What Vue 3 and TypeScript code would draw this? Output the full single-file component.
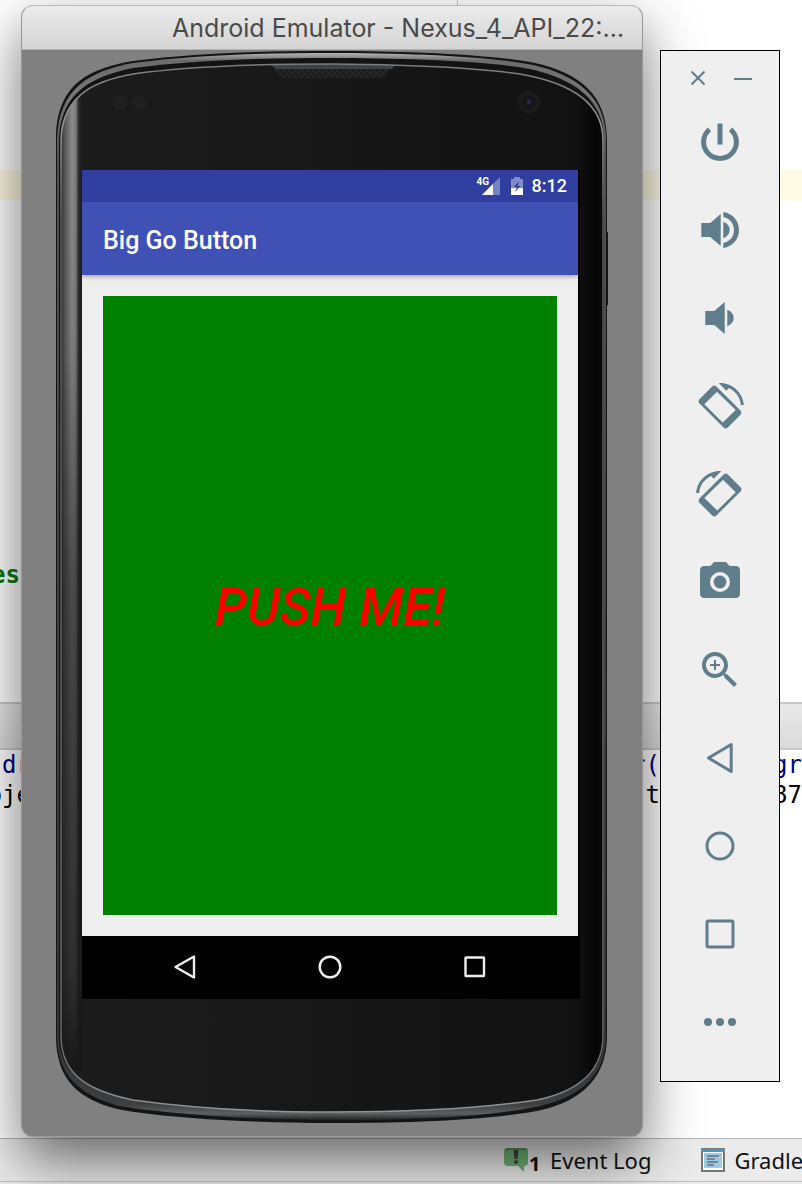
<script setup lang="ts">
interface Segment {
  left?: string
  middle?: string
  right?: string
  tone: string
}

interface Tool {
  name: string
  paths?: string[]
  strokes?: string[]
}

const editorLines = Array.from({ length: 20 }, (_, i) => ({
  current: i === 5,
  text: i === 18 ? 'es' : '',
}))

const consoleLines: Segment[] = [
  { left: 'dr', middle: 'r(', right: 'gra', tone: 'navy' },
  { left: 'oje', middle: 't', right: '870', tone: 'plain' },
]

const rotateArc =
  'M8.96 -17.96c6.54 3.1 11.22 9.44 11.94 16.96h3C22.88 -13.32 12.58 -23 0 -23l-1.32 .06 7.62 7.62z'
const rotateBody =
  'M-3.54 -19.5c-1.18-1.18-3.08-1.18-4.24 0L-20.5 -6.78c-1.18 1.18-1.18 3.08 0 4.24l24.04 24.04c1.18 1.18 3.08 1.18 4.24 0l12.72-12.72c1.18-1.18 1.18-3.08 0-4.24zM-3 -14.3L15.7 4 2.7 16.5 -15.7 -1.7z'

const tools: Tool[] = [
  { name: 'Power', strokes: ['M-10.5 -12.6A16.4 16.4 0 1 0 10.5 -12.6', 'M0 -18.5V2.6'] },
  {
    name: 'Volume up',
    paths: [
      'M-18.7 -7H-9.7L.7 -16V16L-9.7 7H-18.7z',
      'M3.3 -8.3C7.5 -6.5 9.7 -3.5 9.7 0S7.5 6.5 3.3 8.3z',
      'M3.3 -18C13 -16.5 19 -9 19 0S13 16.5 3.3 18V13C10 11.5 14 6.5 14 0S10 -11.5 3.3 -13z',
    ],
  },
  {
    name: 'Volume down',
    paths: [
      'M-14.7 -7H-5.7L4.7 -16V16L-5.7 7H-14.7z',
      'M7.3 -8.3C11.5 -6.5 13.7 -3.5 13.7 0S11.5 6.5 7.3 8.3z',
    ],
  },
  { name: 'Rotate left', paths: [rotateArc, rotateBody] },
  { name: 'Rotate right', paths: [rotateArc, rotateBody] },
  {
    name: 'Take screenshot',
    paths: [
      'M-6 -20L-9.66 -16H-16c-2.2 0-4 1.8-4 4V12c0 2.2 1.8 4 4 4H16c2.2 0 4-1.8 4-4V-12c0-2.2-1.8-4-4-4H9.66L6 -20zM0 -10A10 10 0 1 1 0 10A10 10 0 1 1 0 -10z',
      'M0 -6.4A6.4 6.4 0 1 1 0 6.4A6.4 6.4 0 1 1 0 -6.4z',
    ],
  },
  {
    name: 'Zoom',
    paths: [
      'M7 4H5.42l-.56-.54C6.82 1.18 8 -1.78 8 -5 8 -12.18 2.18 -18 -5 -18S-18 -12.18 -18 -5 -12.18 8 -5 8c3.22 0 6.18-1.18 8.46-3.14l.54 .56V7L14 16.98 16.98 14 7 4zM-5 4C-9.98 4 -14 -.02 -14 -5S-9.98 -14 -5 -14 4 -9.98 4 -5 -.02 4 -5 4z',
      'M-6 -10H-4V-6H0V-4H-4V0H-6V-4H-10V-6H-6z',
    ],
  },
  { name: 'Back' },
  { name: 'Home' },
  { name: 'Overview' },
  { name: 'More' },
]
</script>

<template>
  <div class="desktop">
    <div class="ide">
      <section class="editor">
        <div v-for="(line, i) in editorLines" :key="i" class="code-line" :class="{ current: line.current }">
          <b v-if="line.text" class="keyword">{{ line.text }}</b>
        </div>
      </section>
      <div class="tool-header"></div>
      <section class="console">
        <div v-for="line in consoleLines" :key="line.tone" class="console-line" :class="line.tone">
          <span class="seg-left"><span>{{ line.left }}</span></span>
          <span class="seg-middle">{{ line.middle }}</span>
          <span class="seg-right">{{ line.right }}</span>
        </div>
      </section>
      <footer class="ide-status">
        <a class="status-item" href="#">
          <svg class="bubble" width="24" height="24" viewBox="0 0 24 24" aria-hidden="true">
            <path d="M4 0H20Q24 0 24 4V14Q24 18 20 18V24L14 18H4Q0 18 0 14V4Q0 0 4 0z" fill="#6fb576" />
            <path d="M1 2Q3 1 5 1H20Q22 1 23 2" fill="none" stroke="#54945b" stroke-width="2" />
            <path d="M9.500 2H14.500L13.500 11H10.500z" fill="#444" />
            <circle cx="12" cy="14" r="2" fill="#444" />
          </svg>
          <b class="count">1</b>
          <span>Event Log</span>
        </a>
        <a class="status-item gradle" href="#">
          <svg width="24" height="24" viewBox="0 0 24 24" aria-hidden="true">
            <path d="M0 0H24V24H0z" fill="#777" />
            <path d="M2 4H22V22H2z" fill="#fff" />
            <path d="M3 5H21V20H3z" fill="#9fcbe6" />
            <path d="M0 1H24V4H0z" fill="#4a96c4" />
            <path d="M6 8H18M6 11H14M6 14H17M6 17H13" stroke="#444" />
          </svg>
          <span>Gradle</span>
        </a>
      </footer>
    </div>

    <main class="emulator">
      <header class="titlebar">Android Emulator - Nexus_4_API_22:…</header>
      <div class="stage">
        <div class="phone">
          <svg class="casing" viewBox="56 51 552 1071" preserveAspectRatio="none" aria-hidden="true">
            <defs>
              <linearGradient id="rim" x1="0" y1="0" x2="0" y2="1">
                <stop offset="0" stop-color="#b4b4b4" />
                <stop offset="0.007" stop-color="#6c6c6c" />
                <stop offset="0.04" stop-color="#777" />
                <stop offset="0.1" stop-color="#505152" />
                <stop offset="0.93" stop-color="#333435" />
                <stop offset="0.985" stop-color="#3c3e3f" />
                <stop offset="0.994" stop-color="#5c5e60" />
                <stop offset="1" stop-color="#222" />
              </linearGradient>
              <linearGradient id="edge" x1="0" y1="0" x2="0" y2="1">
                <stop offset="0" stop-color="#777b80" />
                <stop offset="0.06" stop-color="#999" />
                <stop offset="0.15" stop-color="#55585a" />
                <stop offset="0.93" stop-color="#66696b" />
                <stop offset="1" stop-color="#929496" />
              </linearGradient>
              <linearGradient id="bevel" x1="0" y1="0" x2="1" y2="0">
                <stop offset="0" stop-color="#222" />
                <stop offset="0.2" stop-color="#555" />
                <stop offset="0.55" stop-color="#8c8c8c" />
                <stop offset="0.72" stop-color="#7c7c7c" />
                <stop offset="0.85" stop-color="#2b2b2b" />
                <stop offset="1" stop-color="#1a1a1a" />
              </linearGradient>
              <linearGradient id="bevel-fade" x1="0" y1="0" x2="0" y2="1">
                <stop offset="0" stop-color="#181818" stop-opacity="0" />
                <stop offset="0.25" stop-color="#181818" stop-opacity="0.1" />
                <stop offset="0.5" stop-color="#181818" stop-opacity="0.55" />
                <stop offset="0.9" stop-color="#181818" stop-opacity="0.8" />
                <stop offset="1" stop-color="#181818" stop-opacity="1" />
              </linearGradient>
              <linearGradient id="glass" x1="0" y1="0" x2="1" y2="0">
                <stop offset="0" stop-color="#1c1c1c" />
                <stop offset="0.5" stop-color="#171717" />
                <stop offset="0.94" stop-color="#121212" />
                <stop offset="0.98" stop-color="#050505" />
                <stop offset="1" stop-color="#111" />
              </linearGradient>
              <pattern id="grille" width="6" height="6" patternUnits="userSpaceOnUse">
                <rect width="6" height="6" fill="#242424" />
                <circle cx="1.500" cy="1.500" r="1" fill="#0f0f0f" />
                <circle cx="4.500" cy="4.500" r="1" fill="#0f0f0f" />
              </pattern>
              <clipPath id="face">
                <path d="M61 140C62 92 100 80 133 74C190 66 265 64 332 64C400 64 480 68 520 74C572 83 603 103 603 140V1035C603 1075 570 1092 537 1099C470 1109 400 1111 332 1111C265 1111 190 1107 133 1099C90 1090 61 1075 61 1035z" />
              </clipPath>
            </defs>
            <path fill="#141414" d="M56 140C56 86 86 69 133 61C200 52 270 51 332 51C400 51 490 54 535 63C580 73 607 95 607 140V232H608V305H607V1035C607 1085 570 1103 537 1110C480 1120 400 1122 332 1122C260 1122 170 1118 117 1108C80 1098 56 1080 56 1035z" />
            <path fill="url(#rim)" d="M57 140C58 88 90 71 133 63C200 54 270 53 332 53C400 53 490 56 533 65C577 75 606 97 606 140V1035C606 1083 568 1099 535 1106C480 1117 400 1119 332 1119C260 1119 175 1114 119 1105C84 1095 57 1078 57 1035z" />
            <path fill="#131314" d="M59 140C60 91 94 76 133 68C200 59 270 58 332 58C400 58 490 61 530 69C574 79 604 99 604 140V1035C604 1075 570 1092 537 1099C470 1109 400 1111 332 1111C265 1111 190 1107 133 1099C90 1090 59 1075 59 1035z" />
            <g clip-path="url(#face)">
              <rect x="56" y="51" width="552" height="1071" fill="url(#glass)" />
              <rect x="60" y="90" width="22" height="980" fill="url(#bevel)" />
              <rect x="60" y="90" width="22" height="980" fill="url(#bevel-fade)" />
              <path d="M268 60H396L384 78H281z" fill="url(#grille)" />
              <path d="M270 64H396L392 69H276z" fill="#3d4144" />
            </g>
            <path fill="none" stroke="url(#edge)" stroke-width="1.500" d="M61 140C62 92 100 80 133 74C190 66 265 64 332 64C400 64 480 68 520 74C572 83 603 103 603 140V1035C603 1075 570 1092 537 1099C470 1109 400 1111 332 1111C265 1111 190 1107 133 1099C90 1090 61 1075 61 1035z" />
            <circle cx="120" cy="103" r="7.500" fill="#1f1f1f" />
            <circle cx="139" cy="103" r="7.500" fill="#1f1f1f" />
            <circle cx="529" cy="102" r="11.500" fill="#1a1a1b" />
            <circle cx="529" cy="102" r="6" fill="#161619" />
            <circle cx="529" cy="102" r="2.500" fill="#25234a" />
          </svg>

          <div class="screen">
            <div class="android-status">
              <span class="signal">
                <span class="network">4G</span>
                <svg width="20" height="20" viewBox="0 0 20 20" aria-hidden="true">
                  <path d="M19 1V19H1z" fill="#fff" opacity="0.35" />
                  <path d="M12 8V19H1z" fill="#fff" />
                </svg>
              </span>
              <svg width="12" height="20" viewBox="0 0 12 20" aria-hidden="true">
                <path d="M3 1H9V3H12V12H0V3H3z" fill="#fff" opacity="0.4" />
                <path d="M0 12H12V19H0z" fill="#fff" />
                <path d="M8 5L3 11H6L4 16L9.500 10H6.500z" fill="#303f9f" />
              </svg>
              <time class="clock">8:12</time>
            </div>
            <h1 class="app-bar">Big Go Button</h1>
            <div class="activity">
              <button class="go-button" type="button">PUSH ME!</button>
            </div>
            <nav class="nav-bar">
              <button type="button" aria-label="Back">
                <svg width="26" height="26" viewBox="0 0 26 26"><path d="M22 2.500V23.500L3.500 13z" /></svg>
              </button>
              <button type="button" aria-label="Home">
                <svg width="26" height="26" viewBox="0 0 26 26"><circle cx="13" cy="13" r="10.300" /></svg>
              </button>
              <button type="button" aria-label="Overview">
                <svg width="26" height="26" viewBox="0 0 26 26"><rect x="3.500" y="3.500" width="18.500" height="18.500" rx="0.500" /></svg>
              </button>
            </nav>
          </div>
        </div>
      </div>
    </main>

    <aside class="toolbar">
      <div class="window-buttons">
        <button type="button" aria-label="Close">
          <svg width="18" height="18" viewBox="-9 -9 18 18"><path d="M-6.500 -6.500L6.500 6.500M6.500 -6.500L-6.500 6.500" /></svg>
        </button>
        <button type="button" aria-label="Minimize">
          <svg width="18" height="18" viewBox="-9 -9 18 18"><path d="M-9 1H9" /></svg>
        </button>
      </div>
      <button v-for="tool in tools" :key="tool.name" class="tool" type="button" :aria-label="tool.name">
        <svg width="48" height="48" viewBox="-24 -24 48 48" :class="{ flipped: tool.name === 'Rotate right' }">
          <path v-for="d in tool.paths" :key="d" :d="d" fill-rule="evenodd" />
          <path v-for="d in tool.strokes" :key="d" :d="d" class="thick" />
          <path v-if="tool.name === 'Back'" class="thin" d="M11.200 -13.500V13.500L-11.500 0z" />
          <circle v-else-if="tool.name === 'Home'" class="thin" r="13" />
          <rect v-else-if="tool.name === 'Overview'" class="thin" x="-13" y="-13" width="26" height="26" rx="1.500" />
          <template v-else-if="tool.name === 'More'">
            <circle v-for="x in [-12, 0, 12]" :key="x" :cx="x" r="4" />
          </template>
        </svg>
      </button>
    </aside>
  </div>
</template>

<style>
body {
  margin: 0;
}
</style>

<style scoped>
* {
  box-sizing: border-box;
}

button {
  padding: 0;
  border: 0;
  background: none;
  cursor: pointer;
}

svg {
  display: block;
}

.desktop {
  position: relative;
  min-height: 100vh;
  overflow: hidden;
  display: flex;
  background: #fff;
}

.ide {
  flex: 1;
  min-width: 0;
  display: flex;
  flex-direction: column;
  font-family: "DejaVu Sans Mono", monospace;
  font-size: 24px;
  line-height: 30px;
}

.editor {
  flex: 1;
  padding-top: 20px;
  background: linear-gradient(#c8c8c8, #c8c8c8) 57% 0 / 1px 6px no-repeat, #fff;
}

.code-line {
  height: 30px;
}

.code-line.current {
  background: #fffae3;
}

.keyword {
  display: flex;
  justify-content: flex-end;
  width: 20px;
  color: #067a10;
}

.tool-header {
  height: 48px;
  border-top: 2px solid #c8c8c8;
  border-bottom: 2px solid #c8c8c8;
  background: linear-gradient(#e9e9e9, #dadada);
}

.console {
  height: 388px;
}

.console-line {
  display: grid;
  grid-template-columns: 31px 1fr 29px;
  height: 30px;
  white-space: nowrap;
}

.navy {
  color: #000080;
}

.seg-left {
  display: flex;
  justify-content: flex-end;
}

.seg-middle {
  padding-right: 113px;
  text-align: right;
}

.seg-right {
  overflow: hidden;
}

.ide-status {
  display: flex;
  align-items: center;
  gap: 50px;
  height: 46px;
  padding: 0 0 4px 504px;
  overflow: hidden;
  border-top: 1px solid #b4b4b4;
  background: linear-gradient(#c0c0c0, #c0c0c0) 0 42px / 100% 1px no-repeat, #ebebeb;
}

.status-item {
  display: flex;
  align-items: center;
  flex: none;
  color: #111;
  font-family: "Noto Sans", sans-serif;
  font-size: 22px;
  line-height: 28px;
  text-decoration: none;
}

.count {
  align-self: flex-end;
  width: 22px;
  padding-left: 1px;
  font-size: 20px;
  line-height: 20px;
}

.gradle {
  gap: 9px;
}

.emulator {
  position: absolute;
  top: 5px;
  right: 159px;
  bottom: 47px;
  left: 21px;
  display: flex;
  flex-direction: column;
  border: 1px solid #999;
  border-top-color: #bbb;
  border-radius: 12px;
  background: #808080;
  box-shadow: 0 24px 56px rgba(0, 0, 0, 0.56);
}

.titlebar {
  height: 44px;
  padding-right: 18px;
  overflow: hidden;
  border-bottom: 1px solid #b4b4b4;
  border-radius: 11px 11px 0 0;
  background: linear-gradient(#ececec, #d3d3d3);
  color: #4a4a4a;
  font-family: Inter, Roboto, sans-serif;
  font-size: 25px;
  line-height: 45px;
  text-align: right;
  white-space: nowrap;
}

.stage {
  flex: 1;
  display: flex;
  padding: 1px 34px 13px;
}

.phone {
  position: relative;
  flex: 1;
  min-width: 0;
  display: flex;
  padding: 119px 28px 124px 26px;
}

.casing {
  position: absolute;
  inset: 0;
  width: 100%;
  height: 100%;
}

.screen {
  position: relative;
  flex: 1;
  display: flex;
  flex-direction: column;
  padding-right: 2px;
  background: #000;
  font-family: Roboto, sans-serif;
  font-weight: 500;
  color: #fff;
}

.android-status {
  display: flex;
  justify-content: flex-end;
  align-items: center;
  height: 32px;
  padding-right: 11px;
  background: #303f9f;
}

.signal {
  position: relative;
  margin-right: 10px;
}

.network {
  position: absolute;
  top: 1px;
  left: -4px;
  font-size: 10px;
  line-height: 10px;
  font-weight: 700;
}

.clock {
  margin-left: 9px;
  font-size: 18px;
  line-height: 34px;
}

.app-bar {
  position: relative;
  height: 73px;
  margin: 0;
  padding-left: 21px;
  background: #3f51b5;
  box-shadow: 0 1px 5px rgba(0, 0, 0, 0.4);
  clip-path: inset(0 0 -8px 0);
  font-size: 25px;
  font-weight: 500;
  line-height: 77px;
}

.activity {
  flex: 1;
  display: flex;
  padding: 21px;
  background: #eee;
}

.go-button {
  flex: 1;
  padding-top: 4px;
  background: #008000;
  color: #f00;
  font: italic 500 52px Roboto, sans-serif;
}

.nav-bar {
  display: flex;
  justify-content: center;
  height: 63px;
  padding-bottom: 2px;
}

.nav-bar button {
  display: grid;
  place-items: center;
  width: 145px;
}

.nav-bar svg {
  fill: none;
  stroke: #eee;
  stroke-width: 2.4;
  stroke-linejoin: round;
}

.toolbar {
  position: absolute;
  top: 50px;
  right: 22px;
  display: flex;
  flex-direction: column;
  width: 120px;
  padding-bottom: 15px;
  border: 1px solid #000;
  background: #efefef;
}

.window-buttons {
  display: flex;
  justify-content: center;
  align-items: flex-end;
  height: 47px;
}

.window-buttons button {
  display: grid;
  place-items: center;
  width: 45px;
  height: 40px;
}

.window-buttons svg {
  stroke: #607d8b;
  stroke-width: 2;
}

.tool {
  display: grid;
  place-items: center;
  height: 88px;
}

.tool svg {
  fill: #607d8b;
}

.flipped {
  transform: scaleX(-1);
}

.tool .thick {
  fill: none;
  stroke: #607d8b;
  stroke-width: 5;
}

.tool .thin {
  fill: none;
  stroke: #607d8b;
  stroke-width: 3;
  stroke-linejoin: round;
}
</style>
